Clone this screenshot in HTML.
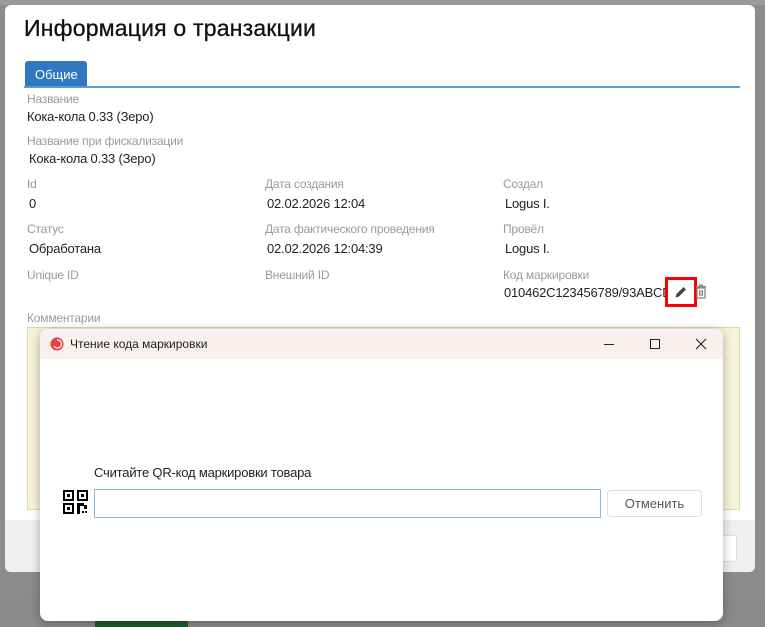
<!DOCTYPE html>
<html><head><meta charset="utf-8"><style>
*{margin:0;padding:0;box-sizing:border-box}
body{width:765px;height:627px;overflow:hidden;background:#8c8c8c;font-family:"Liberation Sans",sans-serif;position:relative}
.a{position:absolute;white-space:nowrap}
.l{font-size:12px;color:#9a9a9a;letter-spacing:-0.2px}
.v{font-size:13px;color:#222;letter-spacing:-0.2px}
</style></head><body>
<div class="a" style="left:0;top:0;width:765px;height:5px;background:#9a9a9a"></div>
<div class="a" style="left:0;top:595px;width:765px;height:32px;background:#8a8a8a"></div>
<div class="a" style="left:95px;top:620px;width:93px;height:7px;background:#1f5a2e"></div>
<div class="a" style="left:5px;top:5px;width:750px;height:567px;background:#fff;border-radius:6px"></div>
<div class="a" style="left:5px;top:520px;width:750px;height:52px;background:#efefef;border-radius:0 0 6px 6px"></div>
<div class="a" style="left:700px;top:535px;width:37px;height:27px;background:#fff;border:1px solid #ddd;border-radius:3px"></div>
<div class="a" style="left:24px;top:15px;font-size:23px;color:#111;letter-spacing:0.2px;-webkit-text-stroke:0.3px #111">Информация о транзакции</div>
<div class="a" style="left:25px;top:61px;width:62px;height:26px;background:#2f78c0;border-radius:3px 3px 0 0;color:#fff;font-size:13px;padding:6px 0 0 10px">Общие</div>
<div class="a" style="left:24px;top:86px;width:716px;height:2px;background:#5b9bd5"></div>
<div class="a l" style="left:27px;top:92px">Название</div>
<div class="a v" style="left:27px;top:109px">Кока-кола 0.33 (Зеро)</div>
<div class="a l" style="left:27px;top:134px">Название при фискализации</div>
<div class="a v" style="left:29px;top:151px">Кока-кола 0.33 (Зеро)</div>
<div class="a l" style="left:27px;top:177px">Id</div>
<div class="a v" style="left:29px;top:196px">0</div>
<div class="a l" style="left:265px;top:177px">Дата создания</div>
<div class="a v" style="left:267px;top:196px">02.02.2026 12:04</div>
<div class="a l" style="left:503px;top:177px">Создал</div>
<div class="a v" style="left:505px;top:196px">Logus I.</div>
<div class="a l" style="left:27px;top:222px">Статус</div>
<div class="a v" style="left:29px;top:241px">Обработана</div>
<div class="a l" style="left:265px;top:222px">Дата фактического проведения</div>
<div class="a v" style="left:267px;top:241px">02.02.2026 12:04:39</div>
<div class="a l" style="left:503px;top:222px">Провёл</div>
<div class="a v" style="left:505px;top:241px">Logus I.</div>
<div class="a l" style="left:27px;top:268px">Unique ID</div>
<div class="a l" style="left:265px;top:268px">Внешний ID</div>
<div class="a l" style="left:503px;top:268px">Код маркировки</div>
<div class="a v" style="left:504px;top:285px;width:163px;overflow:hidden">010462C123456789/93ABCD</div>
<div class="a" style="left:665px;top:277px;width:32px;height:30px;border:3px solid #f00"></div>
<svg class="a" style="left:673px;top:284px" width="16" height="16" viewBox="0 0 16 16"><path d="M2.5 13.5l1-3.5 7-7 2.5 2.5-7 7z" fill="#444"/></svg>
<svg class="a" style="left:695px;top:284px" width="12" height="15" viewBox="0 0 12 15"><rect x="1" y="2" width="10" height="1.5" fill="#888"/><rect x="4" y="0.5" width="4" height="1.5" fill="#888"/><rect x="2" y="4" width="8" height="10" fill="none" stroke="#888" stroke-width="1.3"/><path d="M4.5 6v6M6 6v6M7.5 6v6" stroke="#888"/></svg>
<div class="a l" style="left:27px;top:311px">Комментарии</div>
<div class="a" style="left:27px;top:327px;width:713px;height:183px;background:#f6f3d9;border:1px solid #ddd8b0"></div>
<div class="a" style="left:40px;top:329px;width:683px;height:292px;background:#fff;border-radius:8px;box-shadow:0 2px 10px rgba(0,0,0,.3);overflow:hidden">
 <div style="height:30px;background:#f7f0ec;position:relative">
  <svg style="position:absolute;left:10px;top:8px" width="14" height="14" viewBox="0 0 14 14"><circle cx="7" cy="7" r="6.5" fill="#e84040"/><path d="M7 3a4 4 0 1 1-3 6" stroke="#fff" stroke-width="1.2" fill="none"/></svg>
  <div style="position:absolute;left:30px;top:8px;font-size:12px;color:#222">Чтение кода маркировки</div>
  <div style="position:absolute;left:564px;top:15px;width:10px;height:1px;background:#222"></div>
  <div style="position:absolute;left:610px;top:10px;width:10px;height:10px;border:1px solid #222"></div>
  <svg style="position:absolute;left:655px;top:9px" width="12" height="12"><path d="M1 1l10 10M11 1L1 11" stroke="#222" stroke-width="1.1"/></svg>
 </div>
</div>
<div class="a" style="left:94px;top:465px;font-size:13px;color:#222;letter-spacing:-0.2px">Считайте QR-код маркировки товара</div>
<svg class="a" style="left:63px;top:490px" width="26" height="25" viewBox="0 0 26 25"><rect x="1" y="1" width="9" height="9" fill="none" stroke="#000" stroke-width="2"/><rect x="4" y="4" width="3" height="3"/><rect x="15" y="1" width="9" height="9" fill="none" stroke="#000" stroke-width="2"/><rect x="18" y="4" width="3" height="3"/><rect x="1" y="14" width="9" height="9" fill="none" stroke="#000" stroke-width="2"/><rect x="4" y="17" width="3" height="3"/><rect x="14" y="13" width="3" height="11"/><rect x="17" y="13" width="4" height="3"/><rect x="21" y="15" width="3" height="4"/><rect x="19" y="21" width="2" height="2"/><rect x="22" y="21" width="2" height="2"/></svg>
<div class="a" style="left:94px;top:489px;width:507px;height:29px;border:1px solid #8fb8e0"></div>
<div class="a" style="left:607px;top:490px;width:95px;height:27px;border:1px solid #ddd;border-radius:4px;font-size:13px;color:#555;text-align:center;line-height:25px">Отменить</div>
</body></html>
